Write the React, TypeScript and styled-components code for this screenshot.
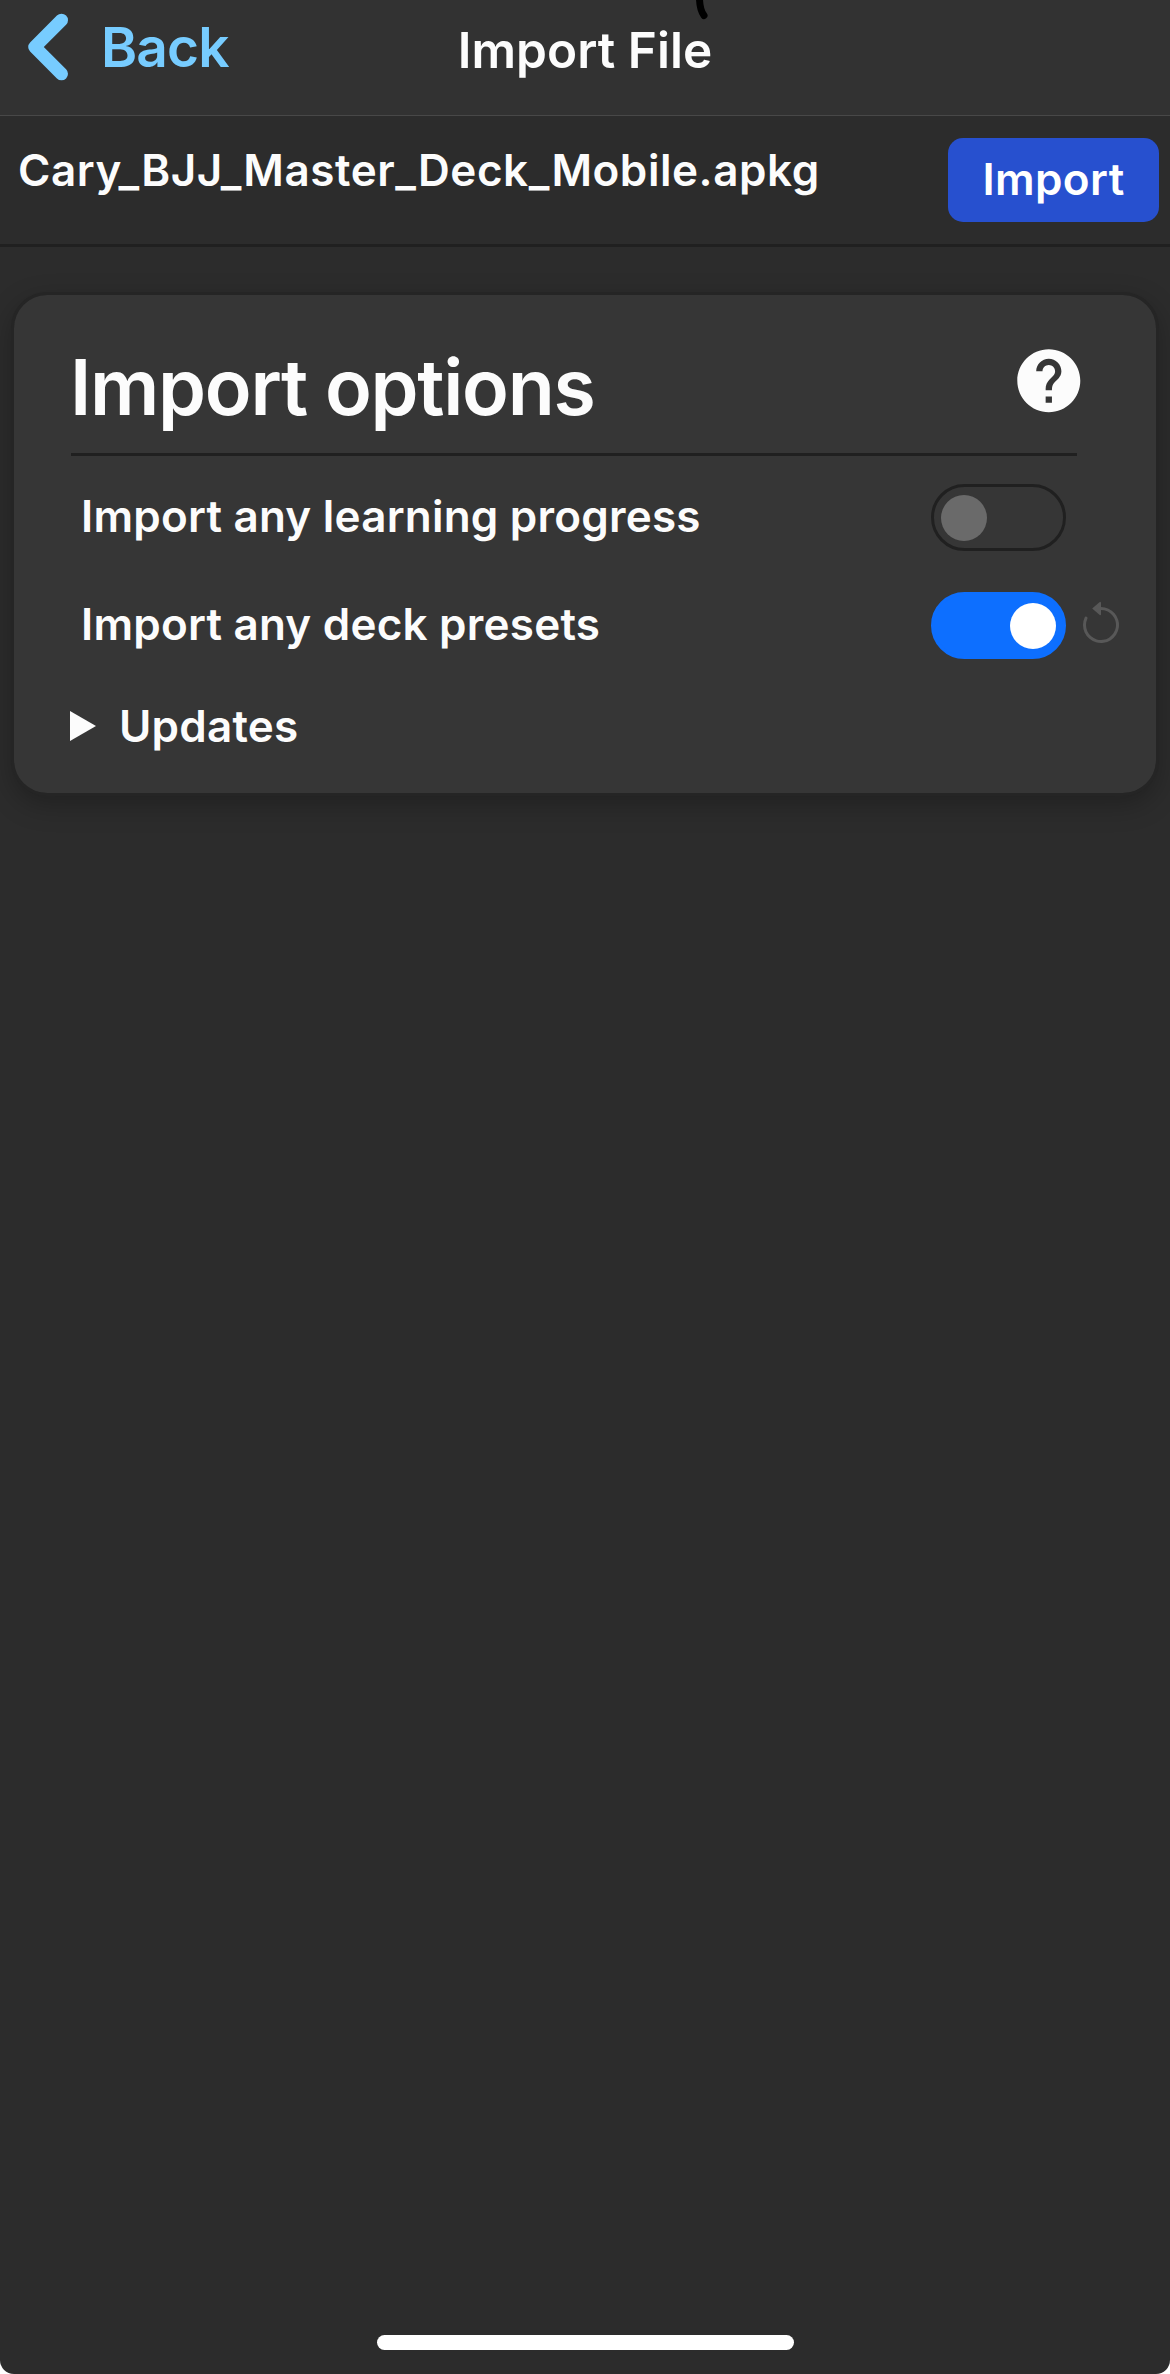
import React, { useState } from "react";
import styled, { createGlobalStyle } from "styled-components";
import { MdHelp } from "react-icons/md";
import { BsArrowCounterclockwise } from "react-icons/bs";

const GlobalStyle = createGlobalStyle`
  * { box-sizing: border-box; }
  html { background: #fff; }
  body { margin: 0; font-family: Inter, "Liberation Sans", sans-serif; color: #fcfcfc; }
  button { font: inherit; color: inherit; border: 0; padding: 0; background: none; cursor: pointer; }
`;

const Screen = styled.div`
  display: flex;
  flex-direction: column;
  height: 2374px;
  background: #2c2c2c;
  border-radius: 0 0 14px 14px;
  overflow: hidden;
`;

const NavBar = styled.header`
  position: relative;
  display: grid;
  grid-template-columns: 1fr auto 1fr;
  height: 116px;
  background: #323232;
  border-bottom: 1px solid #484848;
`;

const BackButton = styled.button`
  display: flex;
  align-items: center;
  gap: 27px;
  height: 94px;
  padding-left: 28px;
  color: #77ccff;
  font-size: 55px;
  font-weight: 600;
  letter-spacing: -0.9px;
`;

const NavTitle = styled.h1`
  margin: 0;
  font-size: 49.5px;
  font-weight: 600;
  line-height: 100px;
  letter-spacing: 0.05px;
`;

const InkMark = styled.svg`
  position: absolute;
  top: 0;
  left: 690px;
`;

const FileBar = styled.div`
  display: flex;
  justify-content: space-between;
  align-items: flex-start;
  padding: 22px 11px 22px 18px;
  border-bottom: 3px solid #202020;
`;

const FileName = styled.span`
  font-size: 44px;
  font-weight: 600;
  line-height: 64px;
  letter-spacing: 0.56px;
`;

const ImportButton = styled.button`
  width: 211px;
  height: 84px;
  padding-bottom: 2px;
  border-radius: 15px;
  background: #2750cf;
  color: #fff;
  font-size: 44px;
  font-weight: 600;
  letter-spacing: 0.4px;
`;

const Card = styled.section`
  margin: 45px 11px 0;
  padding: 46px 79px 37px 57px;
  border: 3px solid #252525;
  border-radius: 36px;
  background: #363636;
  background-clip: padding-box;
  box-shadow: 0 9px 27px rgba(0, 0, 0, 0.25);
`;

const CardHead = styled.div`
  display: flex;
  justify-content: space-between;
  align-items: flex-start;
  height: 115px;
  border-bottom: 3px solid #202020;
`;

const CardTitle = styled.h2`
  margin: 0 0 0 -1px;
  font-size: 77px;
  font-weight: 600;
  line-height: 92px;
  letter-spacing: -1.3px;
`;

const HelpButton = styled.button`
  display: flex;
  margin: 2px -9.5px 0 0;
`;

const Options = styled.div`
  display: flex;
  flex-direction: column;
  gap: 40px;
  padding: 28px 0 36px 10px;
`;

const OptionRow = styled.div`
  display: flex;
  align-items: flex-start;
  height: 68px;
  margin-right: -45px;
`;

const OptionLabel = styled.span`
  flex: 1;
  font-size: 44px;
  font-weight: 600;
  line-height: 64px;
  letter-spacing: 0.22px;
`;

const Track = styled.button<{ $on: boolean }>`
  display: flex;
  align-items: center;
  justify-content: ${(p) => (p.$on ? "flex-end" : "flex-start")};
  width: 135px;
  height: 67px;
  padding: 0 7px;
  border: 3px solid ${(p) => (p.$on ? "#0d6fff" : "#202020")};
  border-radius: 34px;
  background: ${(p) => (p.$on ? "#0d6fff" : "transparent")};
`;

const Knob = styled.span<{ $on: boolean }>`
  width: 46px;
  height: 46px;
  border-radius: 50%;
  background: ${(p) => (p.$on ? "#fff" : "#6a6a6a")};
`;

const ResetSlot = styled.div`
  display: flex;
  width: 56px;
  height: 68px;
  padding: 9px 0 0 11px;
  color: #585858;

  svg {
    flex: none;
  }
`;

const Disclosure = styled.div`
  display: flex;
  align-items: center;
  gap: 23px;
  height: 60px;
  font-size: 44px;
  font-weight: 600;
  letter-spacing: 0.22px;
`;

const Triangle = styled.span`
  width: 26px;
  height: 30px;
  margin-left: -1px;
  background: #fcfcfc;
  clip-path: polygon(0 0, 100% 50%, 0 100%);
`;

const HomeIndicator = styled.div`
  width: 417px;
  height: 15px;
  margin: auto auto 24px;
  border-radius: 8px;
  background: #fff;
`;

interface Option {
  label: string;
  initial: boolean;
  resettable: boolean;
}

const options: Option[] = [
  { label: "Import any learning progress", initial: false, resettable: false },
  { label: "Import any deck presets", initial: true, resettable: true },
];

function OptionItem({ label, initial, resettable }: Option) {
  const [on, setOn] = useState(initial);
  return (
    <OptionRow>
      <OptionLabel>{label}</OptionLabel>
      <Track $on={on} role="switch" aria-checked={on} aria-label={label} onClick={() => setOn(!on)}>
        <Knob $on={on} />
      </Track>
      <ResetSlot>{resettable && <BsArrowCounterclockwise size={48} />}</ResetSlot>
    </OptionRow>
  );
}

export default function App() {
  return (
    <>
      <GlobalStyle />
      <Screen>
        <NavBar>
          <BackButton>
            <svg width="46" height="70" viewBox="0 0 46 70" fill="none" aria-hidden>
              <path d="M33.5 8.2 6.7 35l26.8 26.8" stroke="currentColor" strokeWidth="13" strokeLinecap="round" strokeLinejoin="round" />
            </svg>
            <span>Back</span>
          </BackButton>
          <NavTitle>Import File</NavTitle>
          <InkMark width="24" height="24" viewBox="0 0 24 24" fill="none" aria-hidden>
            <path d="M9.5-6Q9 9 14 15.5" stroke="#000" strokeWidth="7" strokeLinecap="round" />
          </InkMark>
        </NavBar>
        <FileBar>
          <FileName>Cary_BJJ_Master_Deck_Mobile.apkg</FileName>
          <ImportButton>Import</ImportButton>
        </FileBar>
        <Card>
          <CardHead>
            <CardTitle>Import options</CardTitle>
            <HelpButton aria-label="Help">
              <MdHelp size={75.6} />
            </HelpButton>
          </CardHead>
          <Options>
            {options.map((o) => (
              <OptionItem key={o.label} {...o} />
            ))}
          </Options>
          <Disclosure>
            <Triangle />
            <span>Updates</span>
          </Disclosure>
        </Card>
        <HomeIndicator />
      </Screen>
    </>
  );
}
